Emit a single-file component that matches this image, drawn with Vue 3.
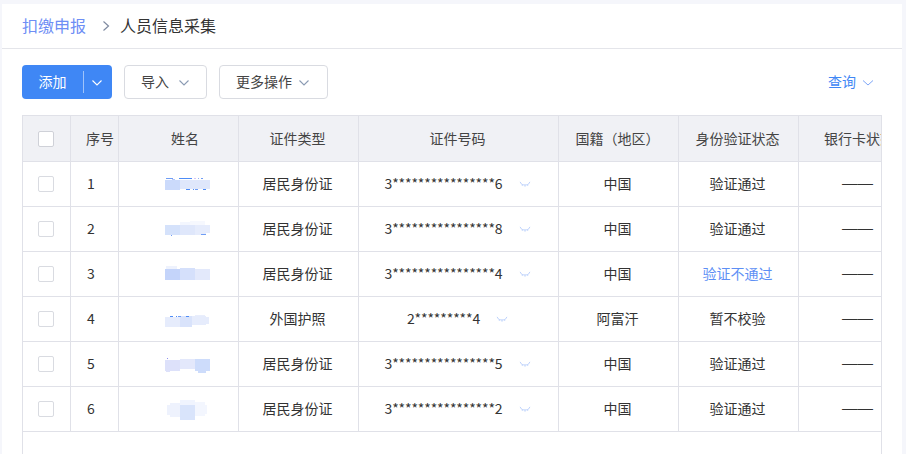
<script setup>
const rows = [
  { n: 1, type: '居民身份证', id: '3****************6', nation: '中国', state: '验证通过', top: 162,
    rects: [[165,180,15,10,'#cbdafb'],[180,180,30,9,'#dfe7fb'],[166,178,7,1,'#6f9df5'],[172,179,3,1,'#b6c8f7'],[179,178,13,1,'#4d8cf7'],[194,178,2,1,'#d9c4f5'],[198,178,1,1,'#8fb0f7'],[201,178,2,1,'#6f9df5'],[186,189,4,1,'#4d8cf7'],[193,189,1,1,'#4d8cf7'],[195,189,3,1,'#6f9df5'],[203,189,3,1,'#4d8cf7']] },
  { n: 2, type: '居民身份证', id: '3****************8', nation: '中国', state: '验证通过', top: 207,
    rects: [[180,222,15,3,'#f3f6fe'],[190,221,15,4,'#f6f8fe'],[165,225,15,10,'#d5e2fb'],[180,225,15,10,'#dfe7fb'],[195,225,15,8,'#e6ecfc'],[195,233,11,2,'#e6ecfc'],[171,235,1,1,'#6f9df5'],[201,234,5,1,'#6f9df5']] },
  { n: 3, type: '居民身份证', id: '3****************4', nation: '中国', state: '验证不通过', top: 252, fail: true,
    rects: [[166,266,11,3,'#eef2fd'],[165,269,15,11,'#c4d4fa'],[180,268,15,12,'#d5e0fb'],[195,269,15,11,'#e3e9fb']] },
  { n: 4, type: '外国护照', id: '2*********4', nation: '阿富汗', state: '暂不校验', top: 297,
    rects: [[165,317,15,10,'#e6ecfc'],[180,316,12,11,'#d9e3fb'],[192,316,14,9,'#e6ecfc'],[195,315,10,1,'#e9eefc'],[206,317,3,7,'#e6ecfc'],[170,316,3,1,'#4d8cf7'],[176,316,1,1,'#4d8cf7'],[178,316,3,1,'#6f9df5'],[186,316,3,1,'#4d8cf7']] },
  { n: 5, type: '居民身份证', id: '3****************5', nation: '中国', state: '验证通过', top: 342,
    rects: [[165,360,15,11,'#dde1fa'],[180,359,15,10,'#e3e8fb'],[166,371,4,1,'#dde1fa'],[195,359,15,12,'#cddcfb'],[198,371,8,2,'#cddcfb'],[167,358,1,1,'#8f8ff0']] },
  { n: 6, type: '居民身份证', id: '3****************2', nation: '中国', state: '验证通过', top: 387,
    rects: [[167,405,13,10,'#eef2fd'],[170,403,10,14,'#eef2fd'],[180,400,15,5,'#f0f4fe'],[180,405,15,15,'#d9e4fb'],[195,405,12,9,'#f3f6fe'],[195,402,10,14,'#f3f6fe']] }
]
</script>

<template>
  <div class="page">
    <div class="card">
      <div class="crumbs">
        <span class="crumb-link">扣缴申报</span>
        <svg class="crumb-sep" width="8" height="12" viewBox="0 0 8 12"><path d="M1.5 1.5 6.5 6 1.5 10.5" fill="none" stroke="#7f8aa0" stroke-width="1.2"/></svg>
        <span class="crumb-now">人员信息采集</span>
      </div>
      <div class="toolbar">
        <div class="btn-add">
          <span class="add-label">添加</span>
          <span class="add-split"></span>
          <svg class="add-caret" width="12" height="8" viewBox="0 0 12 8"><path d="M1.5 1.5 6 6 10.5 1.5" fill="none" stroke="#fff" stroke-width="1.1"/></svg>
        </div>
        <div class="btn btn-import">
          <span>导入</span>
          <svg width="12" height="8" viewBox="0 0 12 8"><path d="M1.5 1.5 6 6 10.5 1.5" fill="none" stroke="#8b9bb3" stroke-width="1.1"/></svg>
        </div>
        <div class="btn btn-more">
          <span>更多操作</span>
          <svg width="12" height="8" viewBox="0 0 12 8"><path d="M1.5 1.5 6 6 10.5 1.5" fill="none" stroke="#8b9bb3" stroke-width="1.1"/></svg>
        </div>
        <div class="query">
          <span>查询</span>
          <svg width="12" height="8" viewBox="0 0 12 8"><path d="M1 1.5 6 6 11 1.5" fill="none" stroke="#7ea6f7" stroke-width="1"/></svg>
        </div>
      </div>
      <div class="table-wrap">
        <table class="grid">
          <colgroup>
            <col class="c-check"><col class="c-no"><col class="c-name"><col class="c-type"><col class="c-id"><col class="c-nation"><col class="c-state"><col class="c-bank">
          </colgroup>
          <thead>
            <tr>
              <th class="check-cell"><span class="check head-check"></span></th>
              <th class="no">序号</th>
              <th class="name-head">姓名</th>
              <th>证件类型</th>
              <th>证件号码</th>
              <th>国籍（地区）</th>
              <th>身份验证状态</th>
              <th class="clip">银行卡状态</th>
            </tr>
          </thead>
          <tbody>
            <tr v-for="r in rows" :key="r.n">
              <td class="check-cell"><span class="check"></span></td>
              <td class="no">{{ r.n }}</td>
              <td class="blur-cell">
                <svg class="blur" width="119" height="44" :viewBox="`119 ${r.top} 119 44`">
                  <rect v-for="(b, i) in r.rects" :key="i" :x="b[0]" :y="b[1]" :width="b[2]" :height="b[3]" :fill="b[4]" />
                </svg>
              </td>
              <td>{{ r.type }}</td>
              <td>
                <span class="id-wrap">
                  <span class="id-text">{{ r.id }}</span>
                  <svg class="eye" width="12" height="7" viewBox="0 0 13 8"><path d="M1.5 2.5C3.5 5.2 9.5 5.2 11.5 2.5M.8 1 2.3 3M3.8 3.9 3.3 5.6M6.5 4.5V6.5M9.2 3.9 9.7 5.6M12.2 1 10.7 3" fill="none" stroke="#bcd1fb" stroke-width="1.1"/></svg>
                </span>
              </td>
              <td>{{ r.nation }}</td>
              <td :class="{ fail: r.fail }">{{ r.state }}</td>
              <td class="dash-cell">——</td>
            </tr>
          </tbody>
        </table>
      </div>
    </div>
  </div>
</template>

<style>
html, body { margin: 0; height: 100%; overflow: hidden; background: #f5f6fb; }
</style>

<style scoped>
.page {
  width: 906px;
  height: 454px;
  box-sizing: border-box;
  padding: 4px 4px 0 2px;
  background: #f5f6fb;
  overflow: hidden;
  font-family: "Noto Sans CJK SC", "Noto Sans", sans-serif;
  font-size: 14px;
  color: #333;
}
.card {
  height: 450px;
  background: #fff;
  overflow: hidden;
  display: flex;
  flex-direction: column;
}
.crumbs {
  box-sizing: border-box;
  height: 45px;
  padding: 0 20px 2px;
  border-bottom: 1px solid #e4e5ea;
  display: flex;
  align-items: center;
  flex: none;
}
.crumb-link { font-size: 16px; color: #6e8ef5; }
.crumb-sep { margin: 2px 10px 0 16px; }
.crumb-now { font-size: 16px; color: #333; }
.toolbar {
  display: flex;
  align-items: center;
  gap: 12px;
  padding: 16px 20px;
  flex: none;
}
.toolbar span:not(.add-split) { margin-bottom: 2px; }
.toolbar svg { margin-top: 1px; }
.btn-add {
  width: 90px;
  height: 34px;
  box-sizing: border-box;
  background: #3f87f5;
  border-radius: 4px;
  color: #fff;
  display: flex;
  align-items: center;
}
.add-label { width: 61px; text-align: center; }
.add-split { width: 1px; height: 22px; background: #9fc3fa; }
.add-caret { margin-left: 7px; }
.btn {
  height: 34px;
  box-sizing: border-box;
  border: 1px solid #d9dbe1;
  border-radius: 4px;
  display: flex;
  align-items: center;
  color: #444;
}
.btn-import { width: 83px; padding-left: 16px; gap: 9px; }
.btn-more { width: 109px; padding-left: 16px; gap: 6px; }
.query {
  margin-left: auto;
  margin-right: 8px;
  display: flex;
  align-items: center;
  gap: 6px;
  color: #3f87f5;
}
.table-wrap {
  margin: 0 20px;
  width: 860px;
  flex: 1;
  box-sizing: border-box;
  border-left: 1px solid #e0e1e8;
  border-top: 1px solid #e0e1e8;
  border-right: 1px solid #e0e1e8;
  overflow: hidden;
}
.grid {
  border-collapse: separate;
  border-spacing: 0;
  table-layout: fixed;
  width: 896px;
}
.c-check { width: 48px; }
.c-no { width: 48px; }
.c-name, .c-type, .c-state, .c-nation, .c-bank { width: 120px; }
.c-id { width: 200px; }
th, td {
  box-sizing: border-box;
  border-right: 1px solid #e0e1e8;
  border-bottom: 1px solid #e0e1e8;
  text-align: center;
  padding: 0 2px 2px 0;
  font-weight: 400;
  white-space: nowrap;
  overflow: hidden;
}
th { height: 46px; background: #f0f1f5; color: #444; font-size: 14px; }
td { height: 45px; color: #333; font-size: 14px; }
th.no { text-align: left; padding-left: 15px; }
td.no { text-align: left; padding-left: 16px; }
.name-head { padding-left: 13px; padding-right: 0; }
th.check-cell { padding: 1px 1px 0 0; }
td.check-cell { padding: 0 1px 0 0; }
.check {
  display: block;
  margin: 0 auto;
  width: 16px;
  height: 16px;
  box-sizing: border-box;
  border: 1px solid #d9dbe1;
  border-radius: 2px;
  background: #fff;
}
.head-check { border-color: #cfd1d8; }
td.blur-cell { padding: 0; }
.blur { display: block; }
.id-wrap { display: inline-flex; align-items: center; }
.id-text { letter-spacing: -0.12px; }
.eye { margin-left: 16px; margin-top: 3px; }
.fail { color: #5d8ff5; }
td.dash-cell {
  text-align: left;
  padding-left: 43px;
  font-family: "Liberation Sans", sans-serif;
  font-size: 15.5px;
}
th.clip { text-align: left; padding-left: 25px; padding-right: 0; }
</style>
